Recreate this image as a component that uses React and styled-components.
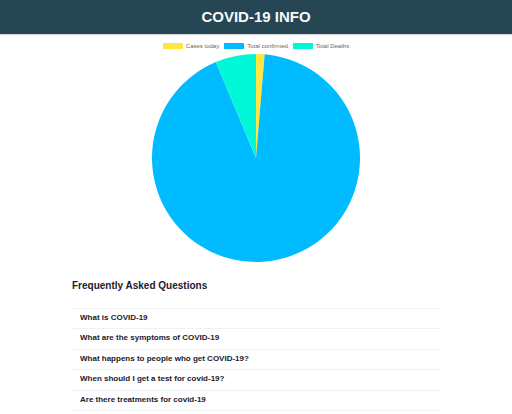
import React from "react";
import styled, { createGlobalStyle } from "styled-components";

const GlobalStyle = createGlobalStyle`
  *, *::before, *::after { box-sizing: border-box; }
  body {
    margin: 0;
    background: #fff;
    color: #1a202c;
    font-family: "Liberation Sans", Arial, sans-serif;
  }
`;

const Header = styled.header`
  background: #264653;
  color: #f7fafc;
  padding: 5px 0;
  text-align: center;
  box-shadow: 0 1px 1px rgba(0, 0, 0, 0.15);
`;

const Title = styled.h1`
  margin: 0;
  font-size: 15px;
  line-height: 24px;
`;

const Chart = styled.figure`
  margin: 8px 0 0;
  display: flex;
  flex-direction: column;
  align-items: center;
`;

const Legend = styled.ul`
  list-style: none;
  margin: 0;
  padding: 0;
  display: flex;
  gap: 5px;
`;

const LegendItem = styled.li`
  display: flex;
  align-items: center;
  gap: 3px;
  font-size: 6px;
  line-height: 8px;
  color: #666;
`;

const Swatch = styled.span`
  width: 20px;
  height: 6px;
  background: ${(p) => p.$color};
`;

const Pie = styled.svg`
  display: block;
  width: 208px;
  height: 208px;
  margin-top: 4px;
`;

const Faq = styled.section`
  margin: 0 72px;
  padding-top: 16px;
`;

const FaqTitle = styled.h2`
  margin: 0 0 14px;
  font-size: 10px;
  line-height: 16px;
`;

const QuestionList = styled.div`
  display: grid;
  grid-auto-rows: 1fr;
  min-height: 103px;
  border-bottom: 1px solid #edf2f7;
`;

const QuestionItem = styled.div`
  border-top: 1px solid #edf2f7;
`;

const Question = styled.button`
  display: block;
  width: 100%;
  padding: 0 8px;
  border: 0;
  background: none;
  color: inherit;
  font: bold 8px/18px "Liberation Sans", Arial, sans-serif;
  text-align: left;
  cursor: pointer;
`;

const series = [
  { label: "Cases today", color: "#ffe640", from: 0, to: 0.0133 },
  { label: "Total confirmed", color: "#00bbff", from: 0.0133, to: 0.937 },
  { label: "Total Deaths", color: "#00f8d8", from: 0.937, to: 1 },
];

const questions = [
  "What is COVID-19",
  "What are the symptoms of COVID-19",
  "What happens to people who get COVID-19?",
  "When should I get a test for covid-19?",
  "Are there treatments for covid-19",
];

const point = (turn) => {
  const angle = turn * 2 * Math.PI;
  return `${104 + 104 * Math.sin(angle)} ${104 - 104 * Math.cos(angle)}`;
};

const slicePath = ({ from, to }) =>
  `M104 104L${point(from)}A104 104 0 ${to - from > 0.5 ? 1 : 0} 1 ${point(to)}Z`;

export default function App() {
  return (
    <>
      <GlobalStyle />
      <Header>
        <Title>COVID-19 INFO</Title>
      </Header>
      <main>
        <Chart>
          <Legend>
            {series.map((s) => (
              <LegendItem key={s.label}>
                <Swatch $color={s.color} />
                {s.label}
              </LegendItem>
            ))}
          </Legend>
          <Pie viewBox="0 0 208 208" role="img" aria-label="COVID-19 cases">
            {series.map((s) => (
              <path key={s.label} d={slicePath(s)} fill={s.color} />
            ))}
          </Pie>
        </Chart>
        <Faq>
          <FaqTitle>Frequently Asked Questions</FaqTitle>
          <QuestionList>
            {questions.map((q) => (
              <QuestionItem key={q}>
                <Question type="button">{q}</Question>
              </QuestionItem>
            ))}
          </QuestionList>
        </Faq>
      </main>
    </>
  );
}
